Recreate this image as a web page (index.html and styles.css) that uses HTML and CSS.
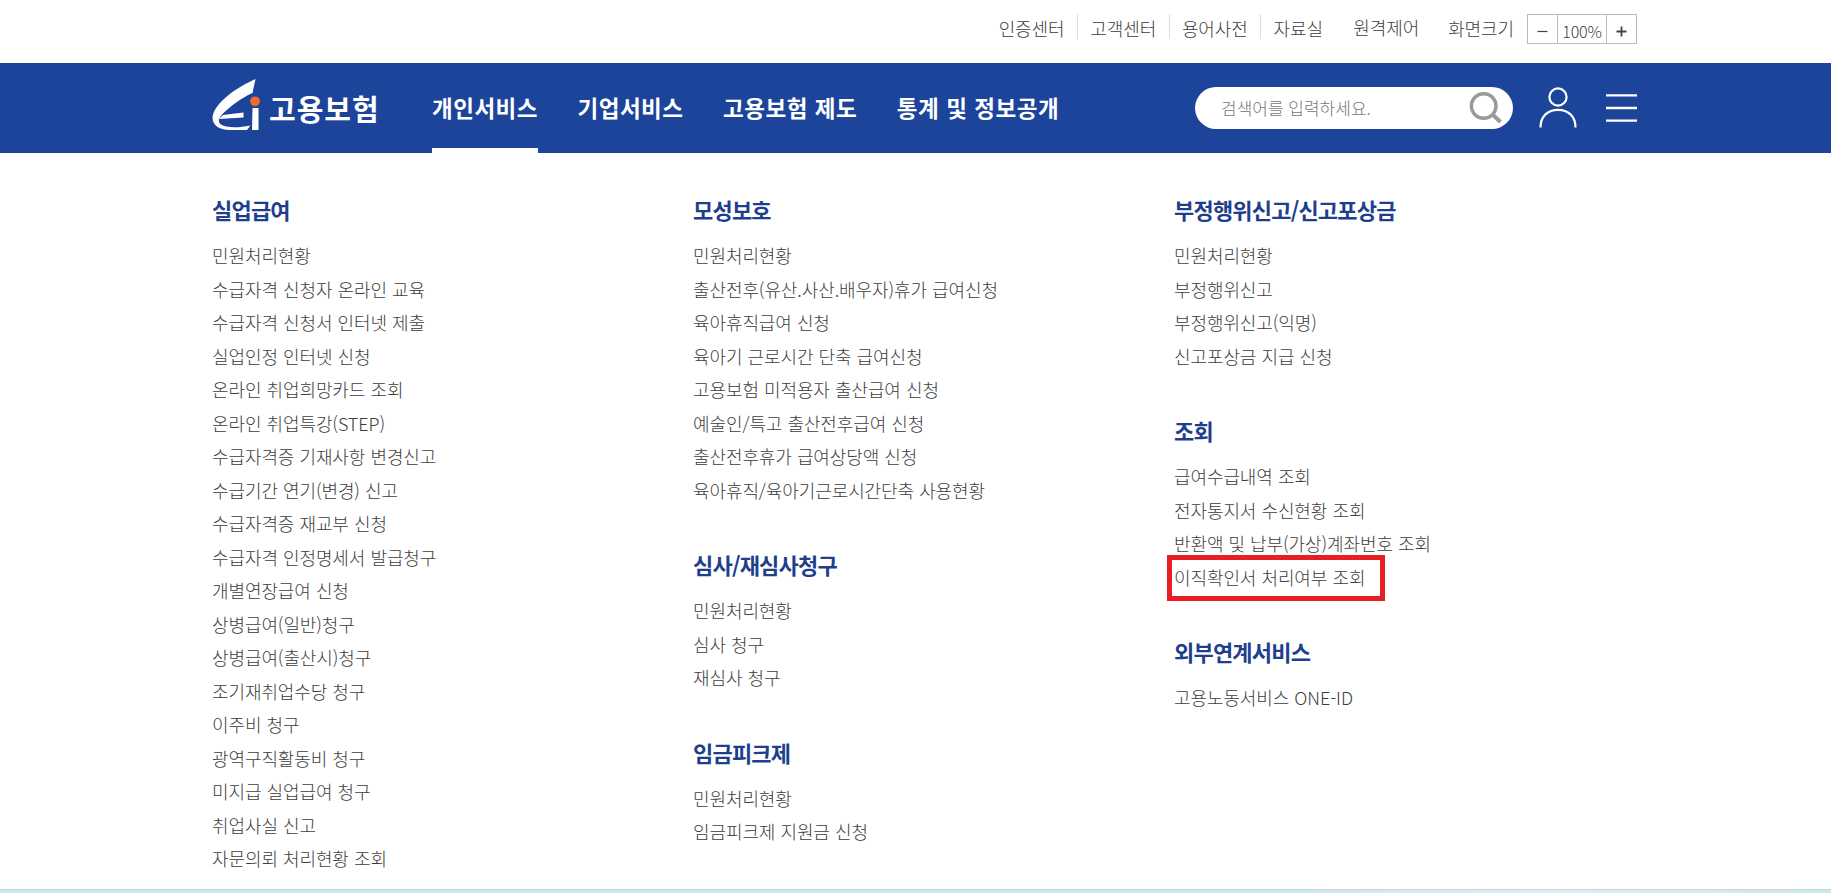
FILE: index.html
```html
<!DOCTYPE html>
<html lang="ko">
<head>
    <meta charset="UTF-8">
    <meta name="viewport" content="width=device-width, initial-scale=1.0">
    <title>고용보험</title>
    <link rel="stylesheet" href="styles.css">
</head>
<body>

<div class="topbar">
    <div class="inner">
        <ul class="util">
            <li>인증센터</li>
            <li>고객센터</li>
            <li>용어사전</li>
            <li>자료실</li>
        </ul>
        <span class="remote">원격제어</span>
        <span class="zoom-label">화면크기</span>
        <div class="zoom">
            <button type="button" aria-label="축소"><svg width="11" height="11" viewBox="0 0 11 11"><path d="M0.5 5.5h10"/></svg></button>
            <span>100%</span>
            <button type="button" aria-label="확대"><svg class="plus" width="11" height="11" viewBox="0 0 11 11"><path d="M0.5 5.5h10M5.5 0.5v10"/></svg></button>
        </div>
    </div>
</div>

<header class="header">
    <div class="inner">
        <a class="logo">
            <svg width="48" height="52" viewBox="0 0 48 52">
                <path fill="#fff" d="M43.5 0C24 9 7 21 1.500 34C-2 43 4 50 16 51H35L38.500 46.500C26 49 14 49 9 45.500C5 42.500 7 38 12 33.500C20 26 30 18.500 40.500 14z"/>
                <path fill="#fff" d="M11 36L31.500 33.500V38.500L7 40z"/>
                <path fill="#fff" d="M40.500 29H46.500V51H40z"/>
                <circle cx="43" cy="22.300" r="4.900" fill="#ee6b2d"/>
            </svg>
            <span>고용보험</span>
        </a>
        <nav class="gnb">
            <a class="on">개인서비스</a>
            <a>기업서비스</a>
            <a>고용보험 제도</a>
            <a>통계 및 정보공개</a>
        </nav>
        <div class="search">
            <input type="text" placeholder="검색어를 입력하세요.">
            <svg width="34" height="34" viewBox="0 0 34 34" fill="none" stroke="#999" stroke-width="3.400">
                <circle cx="15.700" cy="15" r="12.300"/>
                <path d="M24.500 23.500L32.500 31" stroke-width="4"/>
            </svg>
        </div>
        <svg class="user" width="38" height="41" viewBox="0 0 38 41" fill="none" stroke="#fff" stroke-width="2.200">
            <circle cx="19" cy="10" r="8.600"/>
            <path d="M1.500 40.500C1.500 29 9 22.800 19 22.800S36.500 29 36.500 40.500"/>
        </svg>
        <svg class="all-menu" width="31" height="28" viewBox="0 0 31 28" stroke="#fff" stroke-width="2.300">
            <path d="M0 1.300h31M0 14h31M0 26.700h31"/>
        </svg>
    </div>
</header>

<div class="menu">
    <div class="col">
        <section>
            <h2>실업급여</h2>
            <ul>
                <li>민원처리현황</li>
                <li>수급자격 신청자 온라인 교육</li>
                <li>수급자격 신청서 인터넷 제출</li>
                <li>실업인정 인터넷 신청</li>
                <li>온라인 취업희망카드 조회</li>
                <li>온라인 취업특강(STEP)</li>
                <li>수급자격증 기재사항 변경신고</li>
                <li>수급기간 연기(변경) 신고</li>
                <li>수급자격증 재교부 신청</li>
                <li>수급자격 인정명세서 발급청구</li>
                <li>개별연장급여 신청</li>
                <li>상병급여(일반)청구</li>
                <li>상병급여(출산시)청구</li>
                <li>조기재취업수당 청구</li>
                <li>이주비 청구</li>
                <li>광역구직활동비 청구</li>
                <li>미지급 실업급여 청구</li>
                <li>취업사실 신고</li>
                <li>자문의뢰 처리현황 조회</li>
            </ul>
        </section>
    </div>
    <div class="col">
        <section>
            <h2>모성보호</h2>
            <ul>
                <li>민원처리현황</li>
                <li>출산전후(유산.사산.배우자)휴가 급여신청</li>
                <li>육아휴직급여 신청</li>
                <li>육아기 근로시간 단축 급여신청</li>
                <li>고용보험 미적용자 출산급여 신청</li>
                <li>예술인/특고 출산전후급여 신청</li>
                <li>출산전후휴가 급여상당액 신청</li>
                <li>육아휴직/육아기근로시간단축 사용현황</li>
            </ul>
        </section>
        <section>
            <h2>심사/재심사청구</h2>
            <ul>
                <li>민원처리현황</li>
                <li>심사 청구</li>
                <li>재심사 청구</li>
            </ul>
        </section>
        <section>
            <h2>임금피크제</h2>
            <ul>
                <li>민원처리현황</li>
                <li>임금피크제 지원금 신청</li>
            </ul>
        </section>
    </div>
    <div class="col">
        <section>
            <h2>부정행위신고/신고포상금</h2>
            <ul>
                <li>민원처리현황</li>
                <li>부정행위신고</li>
                <li>부정행위신고(익명)</li>
                <li>신고포상금 지급 신청</li>
            </ul>
        </section>
        <section>
            <h2>조회</h2>
            <ul>
                <li>급여수급내역 조회</li>
                <li>전자통지서 수신현황 조회</li>
                <li>반환액 및 납부(가상)계좌번호 조회</li>
                <li class="marked">이직확인서 처리여부 조회</li>
            </ul>
        </section>
        <section>
            <h2>외부연계서비스</h2>
            <ul>
                <li>고용노동서비스 ONE-ID</li>
            </ul>
        </section>
    </div>
</div>
<div class="visual"></div>

</body>
</html>
```
FILE: styles.css
```css
*, *::after {
    box-sizing: border-box;
}
body {
    margin: 0;
    height: 893px;
    display: flex;
    flex-direction: column;
    overflow: hidden;
    background: #fff;
    color: #3c3c3c;
    font-family: "Noto Sans CJK KR", sans-serif;
    font-size: 18px;
    font-weight: 300;
    letter-spacing: -0.1px;
    word-spacing: 0.2px;
}
ul {
    list-style: none;
    margin: 0;
    padding: 0;
}
.inner {
    width: 1425px;
    height: 100%;
    margin-left: 212px;
    display: flex;
}

/* top utility bar */
.topbar {
    height: 63px;
    flex: none;
}
.topbar .inner {
    justify-content: flex-end;
    padding-top: 14px;
    line-height: 29px;
}
.util {
    display: flex;
}
.util li {
    height: 25px;
    padding: 0 12.4px;
    border-left: 1px solid #ddd;
}
.util li:first-child {
    border-left: 0;
}
.remote {
    margin: -1px 29px 0 18px;
}
.zoom-label {
    margin-right: 13px;
}
.zoom {
    display: flex;
    width: 110px;
    height: 30px;
    border: 1px solid #bbb;
}
.zoom button {
    width: 29px;
    padding: 4px 0 0;
    border: 0;
    background: none;
    display: flex;
    align-items: center;
    justify-content: center;
}
.zoom svg {
    stroke: #444;
    stroke-width: 1.2;
}
.zoom .plus {
    stroke-width: 1.8;
}
.zoom span {
    flex: 1;
    border: solid #bbb;
    border-width: 0 1px;
    font-size: 16px;
    line-height: 32px;
    text-align: center;
}

/* blue header */
.header {
    height: 90px;
    flex: none;
    background: #1c449b;
}
.header .inner {
    align-items: center;
}
.logo {
    width: 220px;
    display: flex;
    align-items: center;
    color: #fff;
}
.logo svg {
    flex: none;
    margin-top: -6px;
}
.logo span {
    margin: 0 0 0 9px;
    font-size: 29px;
    font-weight: 700;
    letter-spacing: 1px;
    white-space: nowrap;
}
.gnb {
    display: flex;
    gap: 39.5px;
    height: 100%;
}
.gnb a {
    color: #fff;
    font-size: 22.5px;
    font-weight: 700;
    letter-spacing: 0.5px;
    word-spacing: 0.2px;
    line-height: 88px;
    white-space: nowrap;
}
.gnb .on {
    border-bottom: 5px solid #fff;
}
.search {
    display: flex;
    align-items: center;
    width: 318px;
    height: 42px;
    margin-left: auto;
    padding: 0 11px 0 26px;
    border-radius: 21px;
    background: #fff;
}
.search input {
    flex: 1;
    min-width: 0;
    padding: 0 0 2px;
    border: 0;
    background: none;
    font: inherit;
    font-size: 17px;
    letter-spacing: 0;
}
.search input::placeholder {
    color: #777;
}
.user {
    margin: -2px 29px 0 26px;
}
.all-menu {
    margin-top: -1px;
}

/* opened menu */
.menu {
    flex: 1;
    display: grid;
    grid-template-columns: repeat(3, 481px);
    padding: 42px 0 0 212px;
}
.menu section {
    margin-bottom: 42.75px;
}
.menu section:last-child {
    margin-bottom: 0;
}
.menu h2 {
    margin: 0 0 16.25px;
    color: #1f3f8d;
    font-size: 22px;
    font-weight: 700;
    line-height: 28px;
    letter-spacing: -0.8px;
}
.menu li {
    height: 33.5px;
    line-height: 33.5px;
    white-space: nowrap;
}
.marked {
    position: relative;
}
/* red frame laid over the row */
.marked::after {
    content: "";
    position: absolute;
    left: -7px;
    top: -6px;
    width: 218px;
    height: 46px;
    border: 5px solid #e81e25;
}
.visual {
    flex: none;
    height: 4px;
    border-top: 1px solid #c3d6d9;
    background: linear-gradient(90deg, #cce8ec 0, #cce8ec 70%, #deeff6 85%, #cce8ea 100%);
}
```
